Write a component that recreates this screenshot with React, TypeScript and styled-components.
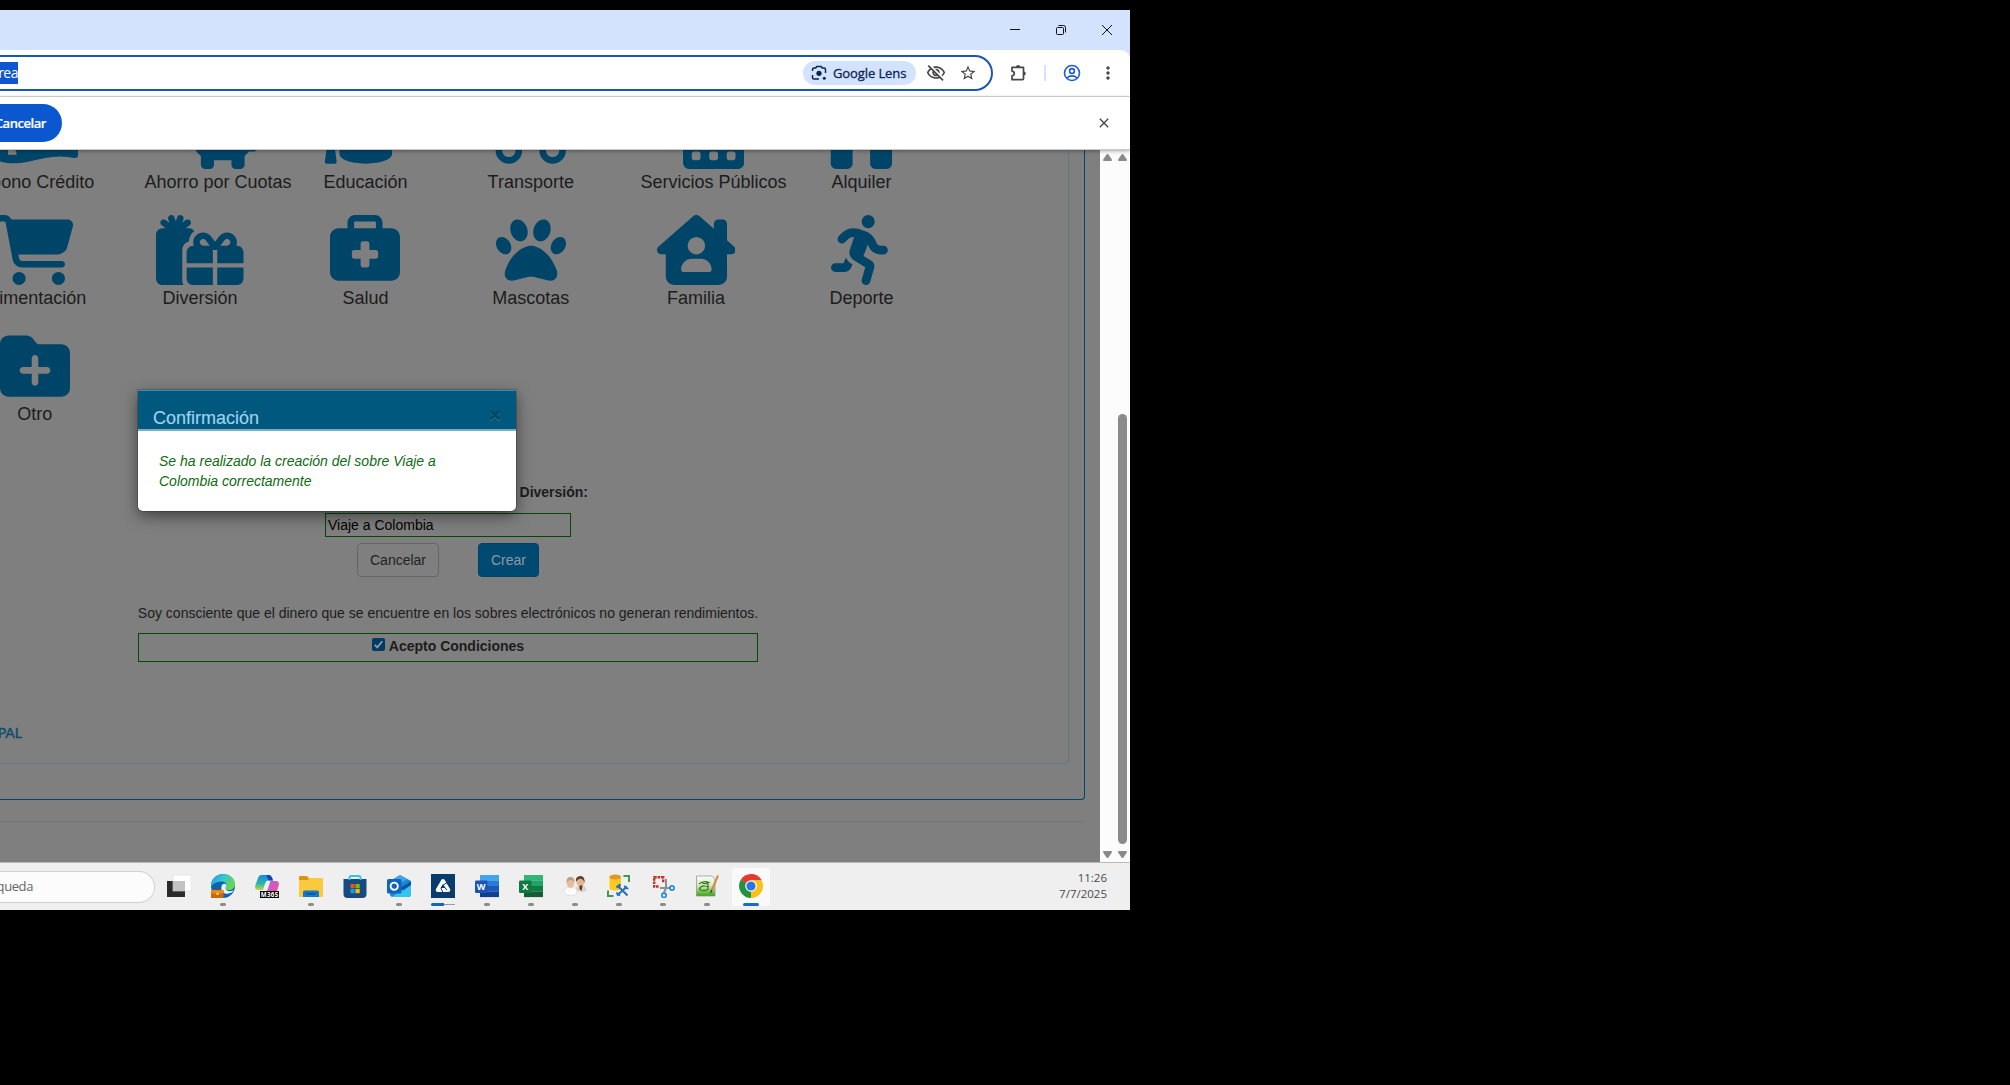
import React from "react";
import styled, { createGlobalStyle, css } from "styled-components";
import {
  FaPiggyBank, FaCalendarDays, FaHouse,
  FaCartShopping, FaGifts, FaBriefcaseMedical, FaPaw, FaHouseChimneyUser, FaPersonRunning, FaFolderPlus,
} from "react-icons/fa6";
import { MdOutlineVisibilityOff, MdStarBorder, MdMoreVert, MdClose } from "react-icons/md";

const ui = `"Open Sans", "Noto Sans", sans-serif`;
const arial = `"Liberation Sans", Arial, sans-serif`;

const Global = createGlobalStyle`
  html, body { margin: 0; background: #000; }
  * { box-sizing: border-box; }
  svg { display: block; flex: none; }
`;
const Screen = styled.div`
  width: 2010px; height: 1085px; padding-top: 10px; background: #000; overflow: hidden;
`;
const Desktop = styled.div`
  width: 1130px; height: 900px; display: flex; flex-direction: column; overflow: hidden; background: #d3e3fd;
`;
const TitleBar = styled.div`
  height: 40px; flex: none; background: #d3e3fd; display: flex; justify-content: flex-end; align-items: center;
`;
const WinButton = styled.div`
  width: 46px; height: 40px; display: grid; place-items: center;
`;
const Toolbar = styled.div`
  height: 47px; flex: none; background: #fff; border-bottom: 1px solid #dcdcdc; border-top-right-radius: 9px;
  display: flex; align-items: center; padding-right: 5px;
`;
const Omnibox = styled.div`
  width: 993px; flex: none; height: 36px; border: 2px solid #1a56b4; border-left: 0; border-radius: 0 18px 18px 0;
  display: flex; align-items: center; font: 14px ${ui}; padding-right: 1px;
`;
const Selection = styled.span`
  width: 18px; height: 22px; line-height: 21px; background: #0b57d0; color: #fff; letter-spacing: -.5px;
  display: flex; justify-content: flex-end;
`;
const Spacer = styled.div`flex: 1;`;
const LensChip = styled.div`
  width: 113px; height: 24px; border-radius: 12px; background: #d3e3fd; color: #0a2458;
  display: flex; align-items: center; gap: 6px; padding-left: 8px; font: 500 13px/24px ${ui}; white-space: nowrap;
  margin-right: 10px; letter-spacing: -.1px; -webkit-text-stroke: .3px #0a2458;
`;
const IconBox = styled.div<{ $w: number; $c?: string }>`
  width: ${p => p.$w}px; flex: none; display: grid; place-items: center; color: ${p => p.$c || "#474747"};
`;
const Divider = styled.div`
  width: 2px; height: 16px; background: #d3e3fd; margin: 0 7px 0 0;
`;
const InfoBar = styled.div`
  height: 53px; flex: none; background: #fff; border-bottom: 1px solid #c9c9c9;
  display: flex; align-items: center; justify-content: space-between; padding-right: 16px; z-index: 1;
  box-shadow: 0 1px 4px rgba(0,0,0,.35);
`;
const PillButton = styled.div`
  width: 62px; height: 38px; border-radius: 0 19px 19px 0; background: #0b57d0; color: #fff;
  font: 600 13px/38px ${ui}; letter-spacing: -.45px; padding-right: 16px; display: flex; justify-content: flex-end;
  -webkit-text-stroke: .2px #fff;
`;
const Viewport = styled.div`
  height: 712px; flex: none; display: flex; position: relative;
`;
const Page = styled.div`
  width: 1100px; height: 712px; background: #7f7f7f; overflow: hidden; font-family: ${arial}; color: #1c1c1c;
`;
const OuterPanel = styled.div`
  width: 1085px; height: 650px; border: solid #02446a; border-width: 0 1px 1px 0; border-bottom-right-radius: 4px;
`;
const InnerPanel = styled.div`
  width: 1069px; height: 614px; border: solid #5f7c86; border-width: 0 1px 1px 0; border-bottom-right-radius: 4px;
  overflow: hidden;
`;
const FooterRule = styled.div`
  width: 1085px; height: 1px; background: #777; margin-top: 21px;
`;
const Categories = styled.div`
  width: 992px; margin: -51.4px 0 0 -47.9px; display: grid; grid-template-columns: repeat(6, 165.33px); grid-auto-rows: 116px;
`;
const Category = styled.div`
  padding: 0 27px; display: flex; color: #004568;
`;
const CategoryBody = styled.div<{ $units: number }>`
  min-width: 100%; width: max-content; flex: none; display: flex; flex-direction: column; align-items: center;
  > svg { height: 70px; width: ${p => (p.$units * 70) / 512}px; }
`;
const CategoryLabel = styled.div`
  font-size: 18px; line-height: 26px; white-space: nowrap; color: #1c1c1c;
`;
const Form = styled.div`
  width: 620px; margin: -14px 0 0 138px; padding-top: 49.4px; display: flex; flex-direction: column; align-items: center; font-size: 14px; line-height: 20px;
`;
const FieldLabel = styled.div`
  width: 280px; text-align: right; font-weight: 700; height: 20px;
`;
const Field = styled.div`
  width: 246px; height: 24px; margin-top: 11px; border: 1px solid #004a04; padding-left: 2px;
  font-size: 14px; line-height: 22px; color: #000;
`;
const Buttons = styled.div`
  display: flex; gap: 39px; margin-top: 6px;
`;
const Button = styled.div<{ $primary?: boolean }>`
  height: 34px; width: 82px; border: 1px solid #666; border-radius: 4px; text-align: center; font-size: 14px; line-height: 32px; color: #222;
  ${p => p.$primary && css`width: 61px; background: #004a72; border-color: #00426a; color: #8d9aa2;`}
`;
const Notice = styled.div`
  height: 20px; margin-top: 26px; white-space: nowrap; font-size: 14px;
`;
const Terms = styled.div`
  width: 620px; height: 29px; margin-top: 10px; border: 1px solid #004a04; display: flex; justify-content: center; align-items: center;
  gap: 4px; font-weight: 700; padding-bottom: 3px;
`;
const Check = styled.div`
  width: 13px; height: 13px; border-radius: 2px; background: #003b66; margin-bottom: 3px;
`;
const MenuLink = styled.div`
  margin-top: 61px; font: 400 14px/20px Lato, ${arial}; color: #0a4a6b; -webkit-text-stroke: .35px #0a4a6b;
  width: 22px; display: flex; justify-content: flex-end;
`;
const Scrolls = styled.div`
  width: 30px; background: #fcfcfc; display: grid; grid-template-columns: 15px 15px;
`;
const Track = styled.div`
  display: flex; flex-direction: column; align-items: center; justify-content: space-between; padding: 4px 0 4px;
`;
const Arrow = styled.svg`width: 9px; height: 7px; fill: #8a8a8a;`;
const Thumb = styled.div`
  width: 9px; height: 430px; border-radius: 5px; background: #8a8a8a; margin: auto 0 7px;
`;
const Modal = styled.div`
  position: absolute; left: 138px; top: 240px; width: 378px; height: 121px; background: #fff; border-radius: 0 0 5px 5px;
  box-shadow: 0 5px 15px rgba(0,0,0,.5), 0 0 0 1px rgba(0,0,0,.18); font-family: ${arial};
`;
const ModalHeader = styled.div`
  height: 41px; background: #00587f; border-top: 1px solid #3a90b3; border-bottom: 2px solid #78aec8; color: #9cd3ee;
  display: flex; justify-content: space-between; font-size: 18px; line-height: 20px; padding: 17px 15px 0 15px;
  -webkit-text-stroke: .15px #9cd3ee;
`;
const ModalClose = styled.div`
  font-size: 21px; font-weight: 700; line-height: 14px; color: #044560; text-shadow: 0 1px 0 #2d7698; -webkit-text-stroke: 0;
`;
const ModalText = styled.div`
  padding: 20px 40px 0 21px; font-size: 14px; line-height: 20px; font-style: italic; color: #0f6b12;
`;
const Taskbar = styled.div`
  height: 48px; flex: none; background: #efefef; border-top: 1px solid #b9b9b9; display: flex; align-items: center; padding-right: 23px;
`;
const Search = styled.div`
  width: 155px; height: 32px; flex: none; background: #fcfcfc; border: 1px solid #d2d2d2; border-left: 0; border-radius: 0 16px 16px 0;
  font: 13px/29px ${ui}; letter-spacing: -.4px; color: #666; display: flex;
`;
const SearchText = styled.span`width: 33px; display: flex; justify-content: flex-end; flex: none;`;
const Apps = styled.div`display: flex; margin-left: 2px;`;
const AppButton = styled.div<{ $active?: boolean }>`
  width: 38px; height: 38px; margin: 0 3px; border-radius: 4px; display: flex; flex-direction: column; align-items: center; justify-content: space-between; padding-top: 6px;
  background: ${p => (p.$active ? "#fafafa" : "transparent")};
`;
const Dot = styled.div<{ $w: number; $c?: string }>`
  width: ${p => p.$w}px; height: 3px; border-radius: 2px; background: ${p => p.$c || "#8b8b8b"};
`;
const SplitDot = styled.div`
  width: 24px; height: 3px; border-radius: 2px; background: linear-gradient(90deg, #1266b5 0 13px, transparent 13px), linear-gradient(transparent 1px, #9a9a9a 1px 2px, transparent 2px);
`;
const Clock = styled.div`
  margin-left: auto; text-align: right; font: 11.5px/16px ${ui}; color: #4a4a4a; padding-bottom: 1px;
`;

const Glyph = ({ children }: { children: React.ReactNode }) => (
  <svg width="24" height="24" viewBox="0 0 24 24">{children}</svg>
);
const TaskView = () => (
  <Glyph>
    <rect x="0" y="7" width="18" height="16" fill="#2b2b2b" />
    <rect x="6" y="1" width="18" height="16" fill="#fff" stroke="#dedede" strokeWidth=".6" />
    <rect x="6" y="7" width="12" height="10" fill="#c2c2c2" />
  </Glyph>
);
const Edge = () => (
  <Glyph>
    <defs>
      <linearGradient id="e1" x1="0" y1="0" x2="1" y2=".5"><stop offset="0" stopColor="#1a97dc" /><stop offset=".5" stopColor="#36c5d7" /><stop offset="1" stopColor="#66d84c" /></linearGradient>
    </defs>
    <circle cx="12" cy="12" r="12" fill="#0b63b5" />
    <path d="M0 13C-.5 5 6 0 12.500 0C19 0 24 4.500 24 10C24 14 21 16 18 16C15.500 16 14.500 15 14.500 14C14.500 13.300 15.500 12.800 15.500 11.300C15.500 9 13.500 7.400 10.500 7.400C6 7.400 1.500 9.500 0 13Z" fill="url(#e1)" />
    <path d="M11.500 10.500C9.500 13 10 17.500 13.500 19.300C16.500 20.500 20 19.500 22.500 17C22.500 16.500 22 16.500 21.500 16.800C18 18 14.500 16.500 14.500 14C14.500 13.300 15.500 12.800 15.500 11.300C15 9.700 12.500 9.200 11.500 10.500Z" fill="#f0f3f5" />
    <path d="M4 16V14.800Q4 14 4.800 14H7.500Q8.300 14 8.300 14.800V16" fill="none" stroke="#8a4b08" />
    <rect x="0" y="16" width="12.500" height="8" fill="#c66a10" />
    <rect x="0" y="16" width="12.500" height="3.500" fill="#e58a1b" />
    <rect x="5.500" y="18.500" width="2" height="2.500" fill="#ffd35a" />
  </Glyph>
);
const BadgeText = styled.text`font: 700 6.2px ${ui}; fill: #fff;`;
const LogoText = styled.text`font: 700 9px ${ui}; fill: #fff; text-anchor: middle;`;
const Copilot = () => (
  <Glyph>
    <defs>
      <linearGradient id="c1" x1="0" y1="0" x2="0" y2="1"><stop offset="0" stopColor="#1688e8" /><stop offset=".6" stopColor="#2fb7a2" /><stop offset="1" stopColor="#c6d63d" /></linearGradient>
      <linearGradient id="c2" x1="0" y1="0" x2="1" y2="1"><stop offset="0" stopColor="#b45df0" /><stop offset="1" stopColor="#f0568a" /></linearGradient>
    </defs>
    <path d="M6 1H14Q16 1 17 3.500L18 6.500H13Q11 6.500 10 9.500L8 16H3Q-1 16 .5 11L3 4Q4 1 6 1Z" fill="url(#c1)" />
    <path d="M11 1H14Q16 1 17 3.500L18 6.500H14Q13 6.500 12.500 4Z" fill="#1745b5" />
    <path d="M15.500 7H21Q25 7 23.500 12L22 17H12Z" fill="url(#c2)" />
    <rect x="5" y="17" width="19" height="7" fill="#000" />
    <BadgeText x="5.800" y="22.800" textLength="17.500">M365</BadgeText>
  </Glyph>
);
const Explorer = () => (
  <Glyph>
    <path d="M0 3Q0 2 1 2H8L10 4.500V8H0Z" fill="#d9950e" />
    <path d="M0 6H9L10.500 4H23Q24 4 24 5V22Q24 23 23 23H1Q0 23 0 22Z" fill="#fbc93d" />
    <path d="M4 23V18Q4 16.500 5.500 16.500H18.500Q20 16.500 20 18V23Z" fill="#0f78c8" />
    <rect x="7" y="19" width="10" height="1.600" rx=".8" fill="#0a4f91" />
  </Glyph>
);
const Store = () => (
  <Glyph>
    <path d="M.500 5H23.500V20Q23.500 24 19.500 24H4.500Q.500 24 .500 20Z" fill="#174a80" />
    <path d="M6.500 6V3.500Q6.500 2 8 2H16Q17.500 2 17.500 3.500V6" fill="none" stroke="#3cc0e8" strokeWidth="2" />
    <rect x="7.500" y="10" width="4.200" height="4.200" fill="#f25022" /><rect x="12.500" y="10" width="4.200" height="4.200" fill="#7fba00" />
    <rect x="7.500" y="15" width="4.200" height="4.200" fill="#00a4ef" /><rect x="12.500" y="15" width="4.200" height="4.200" fill="#ffb900" />
  </Glyph>
);
const Outlook = () => (
  <Glyph>
    <path d="M3 7L13 1L24 7V20Q24 23 21 23H6Q3 23 3 20Z" fill="#1a86d6" />
    <path d="M7 5L13 1.500L20 5.500L12 10Z" fill="#3fa6ea" />
    <path d="M24 9V20Q24 23 21 23H5Z" fill="#35c4ee" />
    <path d="M24 7.500L13 14L16 16.500L24 11Z" fill="#0a50a0" />
    <rect x="0" y="5" width="14.500" height="14.500" rx="1.500" fill="#0f64bd" />
    <circle cx="7.200" cy="12.200" r="3.600" fill="none" stroke="#fff" strokeWidth="1.900" />
  </Glyph>
);
const TriangleApp = () => (
  <Glyph>
    <rect width="24" height="24" fill="#073c6b" />
    <path d="M12 7L6.700 16H17.300Z" fill="none" stroke="#fff" strokeWidth="4" strokeLinejoin="round" />
    <path d="M12 10L9.500 14H14.500Z" fill="#073c6b" />
    <path d="M12.200 11L16.500 8.500M9.800 14L12 18.500M14 13.700L16 16.200" stroke="#073c6b" strokeWidth="1" />
  </Glyph>
);
const Office = ({ letter, tones }: { letter: string; tones: string[] }) => (
  <Glyph>
    {tones.slice(0, 4).map((c, i) => <rect key={c} x="5" y={1 + i * 5.5} width="19" height="5.600" fill={c} />)}
    <rect x="0" y="6.500" width="12.500" height="12.500" rx="1.200" fill={tones[4]} />
    <LogoText x="6.200" y="16.200">{letter}</LogoText>
  </Glyph>
);
const People = () => (
  <Glyph>
    <path d="M12 16Q13 11 18 11Q23 11 24 17L18 18Z" fill="#ddd2c8" />
    <ellipse cx="17.500" cy="7.500" rx="4" ry="5" fill="#e3b48e" />
    <path d="M13 8Q12 2 17.500 2Q22 2 21.500 9Q20 4 16 5Q14 6 13 8Z" fill="#5e3f2c" />
    <path d="M16.500 11.500L19.500 11.500L18.500 17L16.500 15Z" fill="#5a3524" />
    <path d="M1 18Q1 13 7.500 13Q14 13 14 18Q14 21.500 7.500 21.500Q1 21.500 1 18Z" fill="#fbfbfd" stroke="#cfd2dc" strokeWidth=".6" />
    <ellipse cx="7.500" cy="9" rx="3.800" ry="5" fill="#e8bd9c" />
    <path d="M3.500 8.500Q3 3 7.500 3Q12 3 11.500 8.500Q10 6 7.500 6Q5 6 3.500 8.500Z" fill="#b9a08c" />
  </Glyph>
);
const DbTools = () => (
  <Glyph>
    <path d="M2.500 3V15Q8.500 18 14 15V3Z" fill="#fbc91f" />
    <ellipse cx="8.200" cy="3" rx="5.800" ry="2.400" fill="#dd9a22" />
    <path d="M16.500 2H22V8M1 16.500V22H6.500" fill="none" stroke="#3f9a4f" strokeWidth="2" />
    <path d="M10 21.500L20 12.500M11 12L20.500 21.500" stroke="#2272b8" strokeWidth="2" />
    <path d="M9.500 13.500L13.500 10.500" stroke="#2272b8" strokeWidth="2.400" />
    <path d="M17.500 11.500Q18 15 21.500 14.500M9 19Q12.500 19 12.500 22" fill="none" stroke="#2272b8" strokeWidth="1.600" />
  </Glyph>
);
const Snip = () => (
  <Glyph>
    <path d="M12.500 3.200H3.200V12.500H8M12.200 2V9" fill="none" stroke="#c23522" strokeWidth="2.400" strokeDasharray="2.600 .8" />
    <path d="M15 5V14L12.500 20M9 14H20" fill="none" stroke="#8c8f94" strokeWidth="2" />
    <circle cx="21" cy="14" r="2.200" fill="none" stroke="#1d93d8" strokeWidth="1.700" />
    <circle cx="13" cy="21.300" r="2.200" fill="none" stroke="#1d93d8" strokeWidth="1.700" />
  </Glyph>
);
const Notes = () => (
  <Glyph>
    <defs><linearGradient id="n1" x1="0" y1="0" x2="0" y2="1"><stop offset="0" stopColor="#fafafa" /><stop offset=".45" stopColor="#d9edc2" /><stop offset="1" stopColor="#37a512" /></linearGradient></defs>
    <path d="M1.500 2H17L20 5V22H1.500Z" fill="url(#n1)" stroke="#8c8c8c" strokeWidth=".7" />
    <path d="M4 10Q8 6 14 8.500Q10 10.500 7 9M4.500 15Q6 11 10 12Q14 12 13 15.500Q9 17.500 6 16ZM12 7.500L13.500 13" fill="none" stroke="#3c7a22" strokeWidth="1.200" />
    <path d="M23 1.500L16.500 17" stroke="#c98f45" strokeWidth="2" />
    <path d="M16.800 16L15.500 19" stroke="#333" strokeWidth="1.200" />
  </Glyph>
);
const Chrome = () => (
  <Glyph>
    <path d="M12 12L1.610 6A12 12 0 0 1 22.390 6Z" fill="#e33b2e" />
    <path d="M12 12L22.390 6A12 12 0 0 1 12 24Z" fill="#fbc116" />
    <path d="M12 12L12 24A12 12 0 0 1 1.610 6Z" fill="#229342" />
    <path d="M12 6H22.390L17 10Z" fill="#fbc116" />
    <path d="M17.200 15L12 24L12 15Z" fill="#fbc116" />
    <path d="M1.610 6L6.800 15L12 12Z" fill="#229342" />
    <path d="M12 6H22.390A12 12 0 0 0 12 0Z" fill="#e33b2e" />
    <circle cx="12" cy="12" r="5.800" fill="#fff" />
    <circle cx="12" cy="12" r="4.600" fill="#2b74e8" />
  </Glyph>
);
const LensIcon = () => (
  <svg width="16" height="16" viewBox="0 0 16 16" fill="none" stroke="#0a2458" strokeWidth="1.500">
    <path d="M1.500 6V4.500Q1.500 3 3 3H4.700L5.800 1.500H10.200L11.300 3H13Q14.500 3 14.500 4.500V8M1.500 10V12.500Q1.500 14 3 14H8" />
    <circle cx="8" cy="8.300" r="2.600" fill="#0a2458" stroke="none" />
    <circle cx="13.300" cy="13.200" r="1.500" fill="#0a2458" stroke="none" />
  </svg>
);
const Puzzle = () => (
  <svg width="18" height="18" viewBox="0 0 18 18" fill="none" stroke="#474747" strokeWidth="1.700" strokeLinejoin="round">
    <path d="M2 3.300H13.500V14.800Q13.500 15.700 12.600 15.700H2V11.800Q4.300 11.300 4.300 9.500Q4.300 7.700 2 7.200Z" />
    <path d="M6 3A2.100 2.100 0 0 1 10.200 3ZM13.700 7.400A2.100 2.100 0 0 1 13.700 11.600Z" fill="#474747" stroke="none" />
  </svg>
);
const Profile = () => (
  <svg width="18" height="18" viewBox="0 0 18 18" fill="none" stroke="#1f5bcb" strokeWidth="1.600">
    <circle cx="9" cy="9" r="7.500" /><circle cx="9" cy="7" r="2.400" /><path d="M3.700 14Q9 9.700 14.300 14" />
  </svg>
);

const Banknote = () => (
  <svg viewBox="0 0 84 70" fill="currentColor" fillRule="evenodd">
    <path d="M0 12Q20 20 42 12T83 10V56Q83 59.500 79.500 59Q66 56 50 59Q40 61.200 33 62.700Q22 65.200 12 64Q5 63 0 61ZM13 46V55.700H21.700Q21.700 49 13 46Z" />
  </svg>
);
const Graduation = () => (
  <svg viewBox="0 0 640 512" fill="currentColor">
    <path d="M0 160L320 40L640 160L320 280Z" />
    <path d="M128 300V405C128 442 214 473 320 473S512 442 512 405V300L320 350Z" />
    <path d="M44 300H86L107 455Q109 473 92 473H36Q19 473 21 455Z" />
  </svg>
);
const Van = () => (
  <svg viewBox="0 0 640 512" fill="currentColor">
    <path d="M32 32H470L640 230V340Q640 366 614 366H26Q0 366 0 340V64Q0 32 32 32Z" />
    <circle cx="160" cy="376" r="73" fill="#7f7f7f" stroke="currentColor" strokeWidth="48" />
    <circle cx="480" cy="376" r="73" fill="#7f7f7f" stroke="currentColor" strokeWidth="48" />
  </svg>
);

// units: width of the glyph's own grid, whose height is always 512
const categories = [
  { Icon: Banknote, units: 614, label: "Abono Crédito" },
  { Icon: FaPiggyBank, units: 576, label: "Ahorro por Cuotas" },
  { Icon: Graduation, units: 640, label: "Educación" },
  { Icon: Van, units: 640, label: "Transporte" },
  { Icon: FaCalendarDays, units: 448, label: "Servicios Públicos" },
  { Icon: FaHouse, units: 576, label: "Alquiler" },
  { Icon: FaCartShopping, units: 576, label: "Alimentación" },
  { Icon: FaGifts, units: 640, label: "Diversión" },
  { Icon: FaBriefcaseMedical, units: 512, label: "Salud" },
  { Icon: FaPaw, units: 512, label: "Mascotas" },
  { Icon: FaHouseChimneyUser, units: 576, label: "Familia" },
  { Icon: FaPersonRunning, units: 448, label: "Deporte" },
  { Icon: FaFolderPlus, units: 512, label: "Otro" },
];

const apps: { icon: React.ReactNode; mark?: "dot" | "split" | "active" }[] = [
  { icon: <TaskView /> },
  { icon: <Edge />, mark: "dot" },
  { icon: <Copilot /> },
  { icon: <Explorer />, mark: "dot" },
  { icon: <Store /> },
  { icon: <Outlook />, mark: "dot" },
  { icon: <TriangleApp />, mark: "split" },
  { icon: <Office letter="W" tones={["#41a5ee", "#2b7cd3", "#185abd", "#103f91", "#1b55b5"]} />, mark: "dot" },
  { icon: <Office letter="X" tones={["#2fb574", "#21a366", "#107c41", "#185c37", "#0f7a40"]} />, mark: "dot" },
  { icon: <People />, mark: "dot" },
  { icon: <DbTools />, mark: "dot" },
  { icon: <Snip />, mark: "dot" },
  { icon: <Notes />, mark: "dot" },
  { icon: <Chrome />, mark: "active" },
];

const Up = () => <Arrow viewBox="0 0 9 7"><path d="M4.500 0Q5.200 0 5.700 .8L9 5.800Q9 7 8 7H1Q0 7 0 5.800L3.300 .8Q3.800 0 4.500 0Z" /></Arrow>;
const Down = () => <Arrow viewBox="0 0 9 7"><path d="M4.500 7Q5.200 7 5.700 6.200L9 1.200Q9 0 8 0H1Q0 0 0 1.200L3.300 6.200Q3.800 7 4.500 7Z" /></Arrow>;

export default function App() {
  return (
    <Screen>
      <Global />
      <Desktop>
        <TitleBar>
          <WinButton><svg width="10" height="10"><path d="M0 4.500H10" stroke="#111" /></svg></WinButton>
          <WinButton>
            <svg width="10" height="10" fill="none" stroke="#111"><rect x=".5" y="2.500" width="7" height="7" rx="1" /><path d="M2.500 .5H7.500Q9.500 .5 9.500 2.500V7.500" /></svg>
          </WinButton>
          <WinButton><svg width="10" height="10"><path d="M0 0L10 10M10 0L0 10" stroke="#111" /></svg></WinButton>
        </TitleBar>
        <Toolbar>
          <Omnibox>
            <Selection>rea</Selection>
            <Spacer />
            <LensChip><LensIcon />Google Lens</LensChip>
            <IconBox $w={20}><MdOutlineVisibilityOff size={20} /></IconBox>
            <IconBox $w={44}><MdStarBorder size={18} /></IconBox>
          </Omnibox>
          <IconBox $w={51}><Puzzle /></IconBox>
          <Divider />
          <IconBox $w={38}><Profile /></IconBox>
          <IconBox $w={34}><MdMoreVert size={20} /></IconBox>
        </Toolbar>
        <InfoBar>
          <PillButton>Cancelar</PillButton>
          <IconBox $w={20}><MdClose size={16} /></IconBox>
        </InfoBar>
        <Viewport>
          <Page>
            <OuterPanel>
              <InnerPanel>
                <Categories>
                  {categories.map(({ Icon, units, label }) => (
                    <Category key={label}>
                      <CategoryBody $units={units}>
                        <Icon />
                        <CategoryLabel>{label}</CategoryLabel>
                      </CategoryBody>
                    </Category>
                  ))}
                </Categories>
                <Form>
                  <FieldLabel>Diversión:</FieldLabel>
                  <Field>Viaje a Colombia</Field>
                  <Buttons>
                    <Button>Cancelar</Button>
                    <Button $primary>Crear</Button>
                  </Buttons>
                  <Notice>Soy consciente que el dinero que se encuentre en los sobres electrónicos no generan rendimientos.</Notice>
                  <Terms>
                    <Check><svg width="13" height="13" viewBox="0 0 13 13"><path d="M2.800 6.800L5.300 9.300L10.300 3.200" fill="none" stroke="#9a9a9a" strokeWidth="1.800" /></svg></Check>
                    Acepto Condiciones
                  </Terms>
                </Form>
                <MenuLink>PAL</MenuLink>
              </InnerPanel>
            </OuterPanel>
            <FooterRule />
          </Page>
          <Scrolls>
            <Track><Up /><Down /></Track>
            <Track><Up /><Thumb /><Down /></Track>
          </Scrolls>
          <Modal>
            <ModalHeader>Confirmación<ModalClose>×</ModalClose></ModalHeader>
            <ModalText>Se ha realizado la creación del sobre Viaje a Colombia correctamente</ModalText>
          </Modal>
        </Viewport>
        <Taskbar>
          <Search><SearchText>queda</SearchText></Search>
          <Apps>
            {apps.map(({ icon, mark }, i) => (
              <AppButton key={i} $active={mark === "active"}>
                {icon}
                {mark === "dot" && <Dot $w={6} />}
                {mark === "split" && <SplitDot />}
                {mark === "active" && <Dot $w={16} $c="#1470c4" />}
              </AppButton>
            ))}
          </Apps>
          <Clock>11:26<br />7/7/2025</Clock>
        </Taskbar>
      </Desktop>
    </Screen>
  );
}
